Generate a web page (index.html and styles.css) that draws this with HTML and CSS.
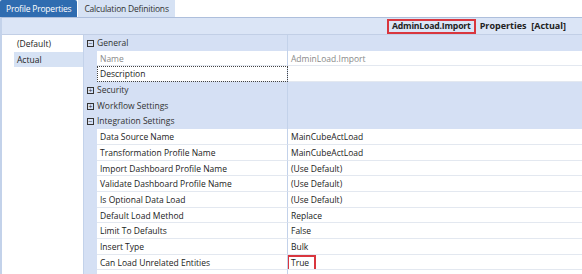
FILE: index.html
```html
<!DOCTYPE html>
<html lang="en">
<head>
    <meta charset="UTF-8">
    <title>Profile Properties</title>
    <link rel="stylesheet" href="styles.css">
</head>
<body>
    <div class="tabs">
        <div class="tab active">Profile Properties</div>
        <div class="tab">Calculation Definitions</div>
    </div>
    <div class="panel">
        <div class="header">
            <span class="title boxed">AdminLoad.Import</span>
            <span class="title wide">Properties&nbsp; [Actual]</span>
        </div>
        <div class="main">
            <div class="list">
                <div class="item">(Default)</div>
                <div class="item selected">Actual</div>
            </div>
            <div class="grid">
                <div class="cat"><span class="toggle">−</span><span class="cat-name">General</span><span class="cat-val"></span></div>
                <div class="prop disabled"><span class="margin"></span><span class="name">Name</span><span class="val">AdminLoad.Import</span></div>
                <div class="prop"><span class="margin"></span><span class="name focused">Description</span><span class="val"></span></div>
                <div class="cat"><span class="toggle">+</span><span class="cat-name">Security</span><span class="cat-val"></span></div>
                <div class="cat"><span class="toggle">+</span><span class="cat-name">Workflow Settings</span><span class="cat-val"></span></div>
                <div class="cat"><span class="toggle">−</span><span class="cat-name">Integration Settings</span><span class="cat-val"></span></div>
                <div class="prop"><span class="margin"></span><span class="name">Data Source Name</span><span class="val">MainCubeActLoad</span></div>
                <div class="prop"><span class="margin"></span><span class="name">Transformation Profile Name</span><span class="val">MainCubeActLoad</span></div>
                <div class="prop"><span class="margin"></span><span class="name">Import Dashboard Profile Name</span><span class="val">(Use Default)</span></div>
                <div class="prop"><span class="margin"></span><span class="name">Validate Dashboard Profile Name</span><span class="val">(Use Default)</span></div>
                <div class="prop"><span class="margin"></span><span class="name">Is Optional Data Load</span><span class="val">(Use Default)</span></div>
                <div class="prop"><span class="margin"></span><span class="name">Default Load Method</span><span class="val">Replace</span></div>
                <div class="prop"><span class="margin"></span><span class="name">Limit To Defaults</span><span class="val">False</span></div>
                <div class="prop"><span class="margin"></span><span class="name">Insert Type</span><span class="val">Bulk</span></div>
                <div class="prop"><span class="margin"></span><span class="name">Can Load Unrelated Entities</span><span class="val"><span class="boxed-val">True</span></span></div>
                <div class="prop"><span class="margin"></span><span class="name"></span><span class="val"></span></div>
            </div>
        </div>
    </div>
</body>
</html>
```

FILE: styles.css
```css
:root {
    --tab-active: #2f6cb0;
    --tab-idle: #d6e2f4;
    --band: #d5e0f4;
    --line: #e3e8f0;
    --divider: #c3d2ea;
    --text: #222;
    --muted: #8a8a8a;
    --red: #d9363e;
}
* { box-sizing: border-box; margin: 0; padding: 0; }
body {
    font-family: 'Open Sans', 'Noto Sans', sans-serif;
    font-size: 8.5px;
    color: var(--text);
    background: #fff;
    width: 582px;
    height: 274px;
    overflow: hidden;
}
.tabs { display: flex; height: 17px; gap: 1px; }
.tab { padding: 0 6px; line-height: 17px; background: var(--tab-idle); color: #333; font-size: 8.5px; letter-spacing: -0.2px; }
.tab.active { background: var(--tab-active); color: #fff; border-radius: 2px 2px 0 0; }
.panel { border-top: 1px solid #aebfdc; border-left: 2px solid var(--divider); }
.header {
    display: flex; justify-content: flex-end; align-items: center; gap: 4px;
    height: 17px; padding-right: 16px;
    background: #dbe5f6; border-bottom: 1px solid #c2cfe6;
}
.title { font-weight: 700; color: #222; line-height: 14px; letter-spacing: -0.2px; }
.title.wide { font-size: 9px; letter-spacing: 0; }
.boxed { border: 2px solid var(--red); padding: 0 3px; line-height: 11px; font-size: 8.7px; }
.main { display: grid; grid-template-columns: 81px 1fr; }
.list { padding-top: 1px; }
.item { height: 15.64px; line-height: 16px; padding-left: 15px; margin-left: 12px; }
.item:first-child { padding-left: 3px; }
.item.selected { background: var(--tab-idle); padding-left: 3px; }
.grid { border-left: 1px solid var(--divider); }
.cat, .prop { display: grid; grid-template-columns: 13px 191px 1fr; height: 15.7px; line-height: 16px; }
.cat { background: var(--band); color: #333; }
.cat-name { grid-column: 2; border-right: 1px solid var(--divider); padding-left: 0; }
.toggle {
    display: flex; align-items: center; justify-content: center;
    width: 7px; height: 7px; margin: 5px 0 0 3px;
    border: 1px solid #333; font-size: 7px; line-height: 5px; color: #333;
}
.prop .margin { background: var(--band); }
.name, .val { background: #fff; border-bottom: 1px solid var(--line); padding-left: 3px; white-space: nowrap; overflow: hidden; }
.name { border-right: 1px solid var(--divider); }
.prop.disabled .name, .prop.disabled .val { color: var(--muted); }
.name.focused { outline: 1px dotted #444; outline-offset: -1px; }
.val { padding-left: 3px; }
.boxed-val { display: inline-block; border: 2px solid var(--red); margin-left: -4px; padding: 0 5px 0 2px; line-height: 12px; height: 16px; }
```
